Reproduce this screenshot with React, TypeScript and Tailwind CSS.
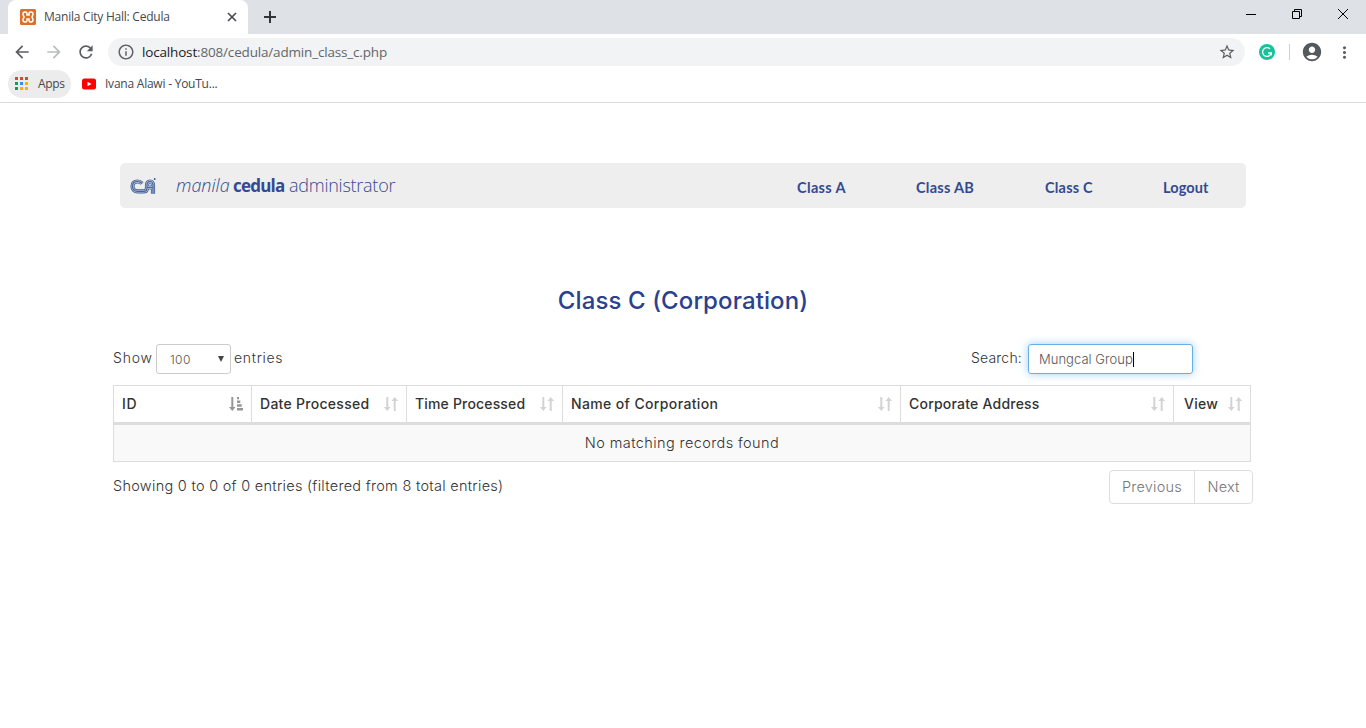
import React from "react";
import {
  MdArrowBack,
  MdArrowForward,
  MdRefresh,
  MdInfoOutline,
  MdStarBorder,
  MdAccountCircle,
  MdMoreVert,
} from "react-icons/md";

const ui = "font-['Open_Sans','Noto_Sans',sans-serif]";

function XamppIcon() {
  return (
    <svg width="16" height="16" viewBox="0 0 16 16">
      <rect width="16" height="16" rx="1.5" fill="#dd6f26" />
      <path
        d="M5 3H5.500C6.700 3 7 4 7 5V6H9V5C9 4 9.300 3 10.500 3H11C12.500 3 13.200 4.200 13 5.500 12.900 6.700 12 7.200 12 8S12.900 9.300 13 10.500C13.200 11.800 12.500 13 11 13H10.500C9.300 13 9 12 9 11V10H7V11C7 12 6.700 13 5.500 13H5C3.500 13 2.800 11.800 3 10.500 3.100 9.300 4 8.800 4 8S3.100 6.700 3 5.500C2.800 4.200 3.500 3 5 3Z"
        fill="none"
        stroke="#fff"
        strokeWidth="1.500"
      />
    </svg>
  );
}

function AppsIcon() {
  const colors = ["#db4437", "#db4437", "#db4437", "#0f9d58", "#4285f4", "#f4b400", "#0f9d58", "#f4b400", "#f4b400"];
  return (
    <svg width="14" height="14" viewBox="0 0 14 14">
      {colors.map((c, i) => (
        <rect key={i} x={(i % 3) * 5} y={Math.floor(i / 3) * 5} width="3" height="3" fill={c} />
      ))}
    </svg>
  );
}

function CaLogo() {
  const outline =
    "M12 5.500C11 4.300 9.700 3.500 7.500 3.500 4.300 3.500 2.500 5.500 2.500 8.300 2.500 11.500 4.500 13.400 7.500 13.400H13.500C16 13.400 17 12 17 10V7.500C17 5 18 3.500 20 3.500S23 5 23 7.500V15.800M17 9.500H23";
  return (
    <svg width="26" height="17" viewBox="0 0 26 17" fill="none">
      <path d={outline} stroke="#4a6496" strokeWidth="4.200" />
      <path d={outline} stroke="#b9c9df" strokeWidth="2.400" />
      <path d={outline} stroke="#4a6496" strokeWidth="1.200" />
      <circle cx="24.700" cy="1" r="0.900" fill="#34508c" />
    </svg>
  );
}

function SortIcon() {
  return (
    <svg width="14" height="14" viewBox="0 0 14 14" fill="#d3d3d3" className="shrink-0">
      <path d="M2.300 0h2v10h2.200L3.300 14 0 10h2.300ZM9.700 14h2V4H14L10.700 0 7.500 4h2.200Z" />
    </svg>
  );
}

function SortAscIcon() {
  return (
    <svg width="14" height="14" viewBox="0 0 14 14" fill="#969696" className="shrink-0">
      <path d="M2.300 0h2v10h2.200L3.300 14 0 10h2.300ZM8 0h2v2.300H8ZM8 3.500h3.300v2.500H8ZM8 7.300h4.700v2.400H8ZM8 11h6v2.400H8Z" />
    </svg>
  );
}

const columns = [
  { label: "ID", cell: "w-[138px] pl-2 pr-2", text: "tracking-[0.8px]" },
  { label: "Date Processed", cell: "w-[155px] pl-2 pr-2", text: "tracking-[0.28px]" },
  { label: "Time Processed", cell: "w-[156px] pl-2 pr-2", text: "tracking-[0.17px]" },
  { label: "Name of Corporation", cell: "w-[338px] pl-2 pr-2", text: "tracking-[0.37px]" },
  { label: "Corporate Address", cell: "w-[273px] pl-2 pr-2", text: "tracking-[0.22px]" },
  { label: "View", cell: "w-[77px] pl-[10px] pr-[9px]", text: "tracking-[0.3px]" },
];

function Browser() {
  return (
    <header className={`${ui} h-[103px] border-b border-[#d9dadc] bg-white text-[#45484c]`}>
      <div className="flex h-[34px] items-start bg-[#dee1e6] pl-2">
        <div className="flex h-[34px] w-[240px] items-center rounded-t-lg bg-white pl-3 pr-[11px]">
          <XamppIcon />
          <span className="ml-2 flex-1 whitespace-nowrap text-[12px] tracking-[-0.23px]">Manila City Hall: Cedula</span>
          <svg width="10" height="10" viewBox="0 0 10 10" stroke="#45484c" strokeWidth="1.600"><path d="m1 1 8 8M9 1 1 9" /></svg>
        </div>
        <svg className="ml-4 mt-[11px]" width="12" height="12" viewBox="0 0 12 12" stroke="#323639" strokeWidth="2"><path d="M6 0v12M0 6h12" /></svg>
        <div className="ml-auto mr-[17px] mt-2 flex gap-[34px]">
          <svg width="12" height="12" viewBox="0 0 12 12" stroke="#000"><path d="M1 6.500h10" /></svg>
          <svg width="12" height="12" viewBox="0 0 12 12" fill="none" stroke="#000"><path d="M1.500 3.500h7v7h-7ZM3.500 3.500v-2h7v7h-2" /></svg>
          <svg width="12" height="12" viewBox="0 0 12 12" stroke="#000"><path d="m1 1 10 10M11 1 1 11" /></svg>
        </div>
      </div>
      <div className="flex h-9 items-center pl-3">
        <MdArrowBack size={20} color="#5a5d61" />
        <MdArrowForward className="ml-3" size={20} color="#babcbe" />
        <MdRefresh className="ml-3" size={20} color="#5a5d61" />
        <div className="ml-[12px] flex h-7 w-[1137px] items-center rounded-full bg-[#f1f3f4] pl-[9px] pr-[9px]">
          <MdInfoOutline size={18} color="#5f6368" />
          <span className="ml-[7px] flex-1 whitespace-nowrap text-[13.5px] tracking-[-0.17px] text-[#63676b]">
            <span className="text-[#202124]">localhost</span>:808/cedula/admin_class_c.php
          </span>
          <MdStarBorder size={18} color="#5a5d61" />
        </div>
        <svg className="ml-[14px]" width="16" height="16" viewBox="0 0 16 16">
          <circle cx="8" cy="8" r="8" fill="#15c39a" />
          <path d="M11 4.800A4.400 4.400 0 1 0 12.300 9H9M12.300 8.500v2.800" stroke="#fff" strokeWidth="1.300" fill="none" />
        </svg>
        <div className="ml-[14px] h-4 w-px bg-[#cfd1d3]" />
        <MdAccountCircle className="ml-[11px]" size={22} color="#55585d" />
        <MdMoreVert className="ml-[12px]" size={19} color="#5a5d61" />
      </div>
      <div className="flex h-7 items-center pl-2 text-[12px]">
        <div className="flex h-7 w-[63px] items-center rounded-full bg-[#ececed] pl-[7px]">
          <AppsIcon />
          <span className="ml-[9px] tracking-[-0.3px]">Apps</span>
        </div>
        <svg className="ml-[11px]" width="14" height="12" viewBox="0 0 14 12">
          <rect y=".5" width="14" height="11" rx="2.500" fill="#f00" />
          <path d="m5.500 3.700 4 2.300-4 2.300Z" fill="#fff" />
        </svg>
        <span className="ml-[9px] whitespace-nowrap tracking-[-0.23px]">Ivana Alawi - YouTu...</span>
      </div>
    </header>
  );
}

export default function App() {
  return (
    <div className="h-[728px] w-[1366px] overflow-hidden bg-white font-['Inter','Liberation_Sans',sans-serif] text-[#333]">
      <Browser />
      <nav className="ml-[120px] mt-[60px] flex h-[45px] w-[1126px] items-center rounded-[5px] bg-[#eee] font-['Lato',sans-serif] text-[#334a92]">
        <div className="ml-[10px] mt-px"><CaLogo /></div>
        <div className="ml-[20px] flex w-[621px] items-baseline whitespace-nowrap font-['Open_Sans',sans-serif] text-[18px] font-light leading-6">
          <i className="w-[57px] tracking-[0]">manila</i>
          <b className="w-[56px] text-[17px] font-bold tracking-[-0.8px]">cedula</b>
          <span className="tracking-[-0.25px]">administrator</span>
        </div>
        <div className="mt-[4px] flex whitespace-nowrap text-[14.5px] font-bold">
          <a className="w-[119px] tracking-[0.35px]">Class A</a>
          <a className="w-[129px] tracking-[0.27px]">Class AB</a>
          <a className="w-[118px] tracking-[0.2px]">Class C</a>
          <a className="tracking-[0.1px]">Logout</a>
        </div>
      </nav>
      <main className="ml-[113px] w-[1140px] text-[14px] font-light">
        <h1 className="mt-[76px] h-[34px] w-[1140px] whitespace-nowrap text-center text-[24px] font-medium leading-[34px] tracking-[0.1px] text-[#29418f]">
          Class C (Corporation)
        </h1>
        <div className="mt-[26px] flex h-[30px] items-center">
          <span className="-mt-[3px] w-[43px] tracking-[0.8px]">Show</span>
          <div className="flex h-[30px] w-[75px] items-center justify-between rounded-[3px] border border-[#ccc] pl-[13px] pr-[6px] text-[12px] text-[#555]">
            <span className="mt-[2px] tracking-[0.4px]">100</span>
            <svg width="6" height="6" viewBox="0 0 6 6" fill="#444"><path d="M0 0h6L3 6Z" /></svg>
          </div>
          <span className="-mt-[3px] ml-[3px] tracking-[0.7px]">entries</span>
          <span className="-mt-[3px] ml-auto tracking-[0.2px]">Search:</span>
          <div className="ml-[6px] mr-[60px] flex h-[30px] w-[165px] items-center rounded-[3px] border border-[#66afe9] pl-[10px] text-[13px] text-[#555] shadow-[0_0_8px_rgba(102,175,233,0.6)]">
            <span className="mt-[2px] whitespace-nowrap tracking-[0.03px]">Mungcal Group</span>
            <span className="h-[15px] w-px bg-black" />
          </div>
        </div>
        <div className="mt-[11px] h-[77px] w-[1138px] border border-[#ddd]">
          <div className="flex h-[39px] border-b-[3px] border-[#ddd]">
            {columns.map((c, i) => (
              <div key={c.label} className={`${c.cell} flex shrink-0 items-center justify-between whitespace-nowrap font-medium ${i < 5 ? "border-r border-[#ddd]" : ""}`}>
                <span className={`-mt-[2px] ${c.text}`}>{c.label}</span>
                {i === 0 ? <SortAscIcon /> : <SortIcon />}
              </div>
            ))}
          </div>
          <div className="flex h-9 items-center justify-center bg-[#f9f9f9]">
            <span className="whitespace-nowrap text-[14.5px] tracking-[0.4px]">No matching records found</span>
          </div>
        </div>
        <div className="mt-2 flex h-[34px] items-center justify-between">
          <span className="-mt-[2px] whitespace-nowrap text-[14.5px] tracking-[0.28px]">Showing 0 to 0 of 0 entries (filtered from 8 total entries)</span>
          <div className="flex h-[34px] w-[144px] rounded-[4px] border border-[#ddd] text-[14.5px] text-[#777]">
            <span className="flex w-[85px] items-center justify-center border-r border-[#ddd] tracking-[0.2px]">Previous</span>
            <span className="flex flex-1 items-center justify-center tracking-[0.2px]">Next</span>
          </div>
        </div>
      </main>
    </div>
  );
}
